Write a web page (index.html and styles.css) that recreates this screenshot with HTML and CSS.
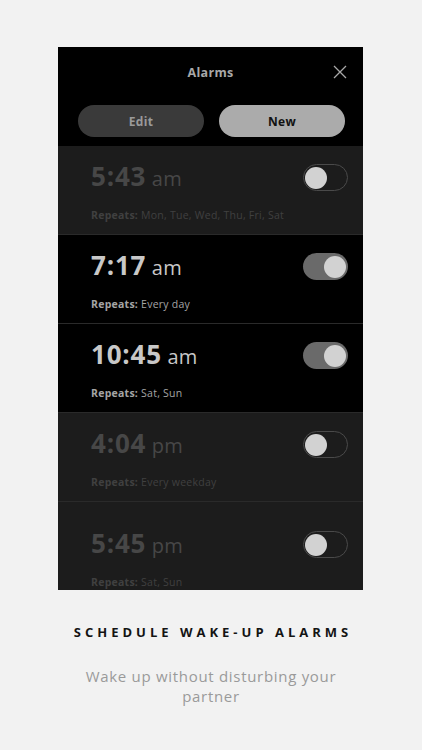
FILE: index.html
```html
<!DOCTYPE html>
<html>
<head>
<meta charset="utf-8">
<link rel="stylesheet" href="styles.css">
</head>
<body>
<div class="page">
  <div class="screen">
    <div class="header">
      <div class="titlebar">
        <span class="title">Alarms</span>
        <svg class="close" width="14" height="14" viewBox="0 0 14 14"><path d="M1 1L13 13M13 1L1 13" stroke="#a8a8a8" stroke-width="1.3" fill="none"/></svg>
      </div>
      <div class="buttons">
        <div class="btn edit">Edit</div>
        <div class="btn new">New</div>
      </div>
    </div>
    <div class="row off">
      <div class="info">
        <div class="time"><b>5:43</b> am</div>
        <div class="repeats"><b>Repeats:</b> Mon, Tue, Wed, Thu, Fri, Sat</div>
      </div>
      <div class="toggle"><span class="knob"></span></div>
    </div>
    <div class="row on">
      <div class="info">
        <div class="time"><b>7:17</b> am</div>
        <div class="repeats"><b>Repeats:</b> Every day</div>
      </div>
      <div class="toggle"><span class="knob"></span></div>
    </div>
    <div class="row on">
      <div class="info">
        <div class="time"><b>10:45</b> am</div>
        <div class="repeats"><b>Repeats:</b> Sat, Sun</div>
      </div>
      <div class="toggle"><span class="knob"></span></div>
    </div>
    <div class="row off">
      <div class="info">
        <div class="time"><b>4:04</b> pm</div>
        <div class="repeats"><b>Repeats:</b> Every weekday</div>
      </div>
      <div class="toggle"><span class="knob"></span></div>
    </div>
    <div class="row off last">
      <div class="info">
        <div class="time"><b>5:45</b> pm</div>
        <div class="repeats"><b>Repeats:</b> Sat, Sun</div>
      </div>
      <div class="toggle"><span class="knob"></span></div>
    </div>
  </div>
  <div class="caption">
    <h1>SCHEDULE WAKE-UP ALARMS</h1>
    <p>Wake up without disturbing your<br>partner</p>
  </div>
</div>
</body>
</html>
```

FILE: styles.css
```css
* { box-sizing: border-box; }
html, body {
  margin: 0;
  padding: 0;
  background: #f2f2f2;
  font-family: "Open Sans", "Liberation Sans", sans-serif;
}
.page {
  width: 422px;
  height: 750px;
  padding-top: 47px;
  display: flex;
  flex-direction: column;
  align-items: center;
}
.screen {
  width: 305px;
  height: 543px;
  margin-left: -1px;
  background: #1c1c1c;
  overflow: hidden;
  display: flex;
  flex-direction: column;
}
.header {
  background: #000;
  height: 99px;
  flex-shrink: 0;
}
.titlebar {
  position: relative;
  height: 50px;
  display: flex;
  align-items: center;
  justify-content: center;
}
.title {
  color: #a8a8a8;
  font-weight: 700;
  font-size: 12.5px;
  letter-spacing: 0.3px;
  margin-top: 1px;
}
.close {
  position: absolute;
  right: 16px;
  top: 18px;
}
.buttons {
  display: flex;
  gap: 15px;
  padding: 8px 18px 0 20px;
}
.btn {
  flex: 1;
  height: 32px;
  border-radius: 16px;
  display: flex;
  align-items: center;
  justify-content: center;
  font-weight: 700;
  font-size: 12px;
  letter-spacing: 0.3px;
}
.edit { background: #3a3a3a; color: #9a9a9a; }
.new { background: #ababab; color: #111; }
.row {
  height: 89px;
  flex-shrink: 0;
  display: flex;
  justify-content: space-between;
  align-items: flex-start;
  padding: 14px 15px 0 33px;
  border-bottom: 1px solid #2a2a2a;
}
.row.on { background: #000; }
.row.off { background: #1c1c1c; }
.row.last { padding-top: 25px; border-bottom: none; }
.time {
  font-size: 20px;
  line-height: 32px;
  height: 32px;
  letter-spacing: 0.3px;
}
.time b {
  font-size: 26px;
  font-weight: 700;
  letter-spacing: 0.8px;
}
.repeats {
  font-size: 10.5px;
  margin-top: 16px;
  line-height: 14px;
  letter-spacing: 0.25px;
}
.on .time { color: #c8c8c8; }
.on .repeats { color: #a5a5a5; }
.off .time { color: #474747; }
.off .repeats { color: #404040; }
.toggle {
  width: 45px;
  height: 27px;
  border-radius: 14px;
  margin-top: 4px;
  display: flex;
  align-items: center;
  padding: 0 2px;
}
.knob {
  width: 22px;
  height: 22px;
  border-radius: 50%;
  background: #d2d2d2;
}
.off .toggle { border: 1px solid #4a4a4a; padding: 0 1px; }
.on .toggle { background: #6a6a6a; justify-content: flex-end; }
.caption {
  text-align: center;
  margin-top: 33px;
}
.caption h1 {
  margin: 0;
  font-size: 13px;
  font-weight: 700;
  letter-spacing: 4px;
  color: #141414;
  padding-left: 4px;
}
.caption p {
  margin: 25px 0 0;
  font-size: 15px;
  line-height: 20px;
  color: #9a9a9a;
  letter-spacing: 0.7px;
}
```
